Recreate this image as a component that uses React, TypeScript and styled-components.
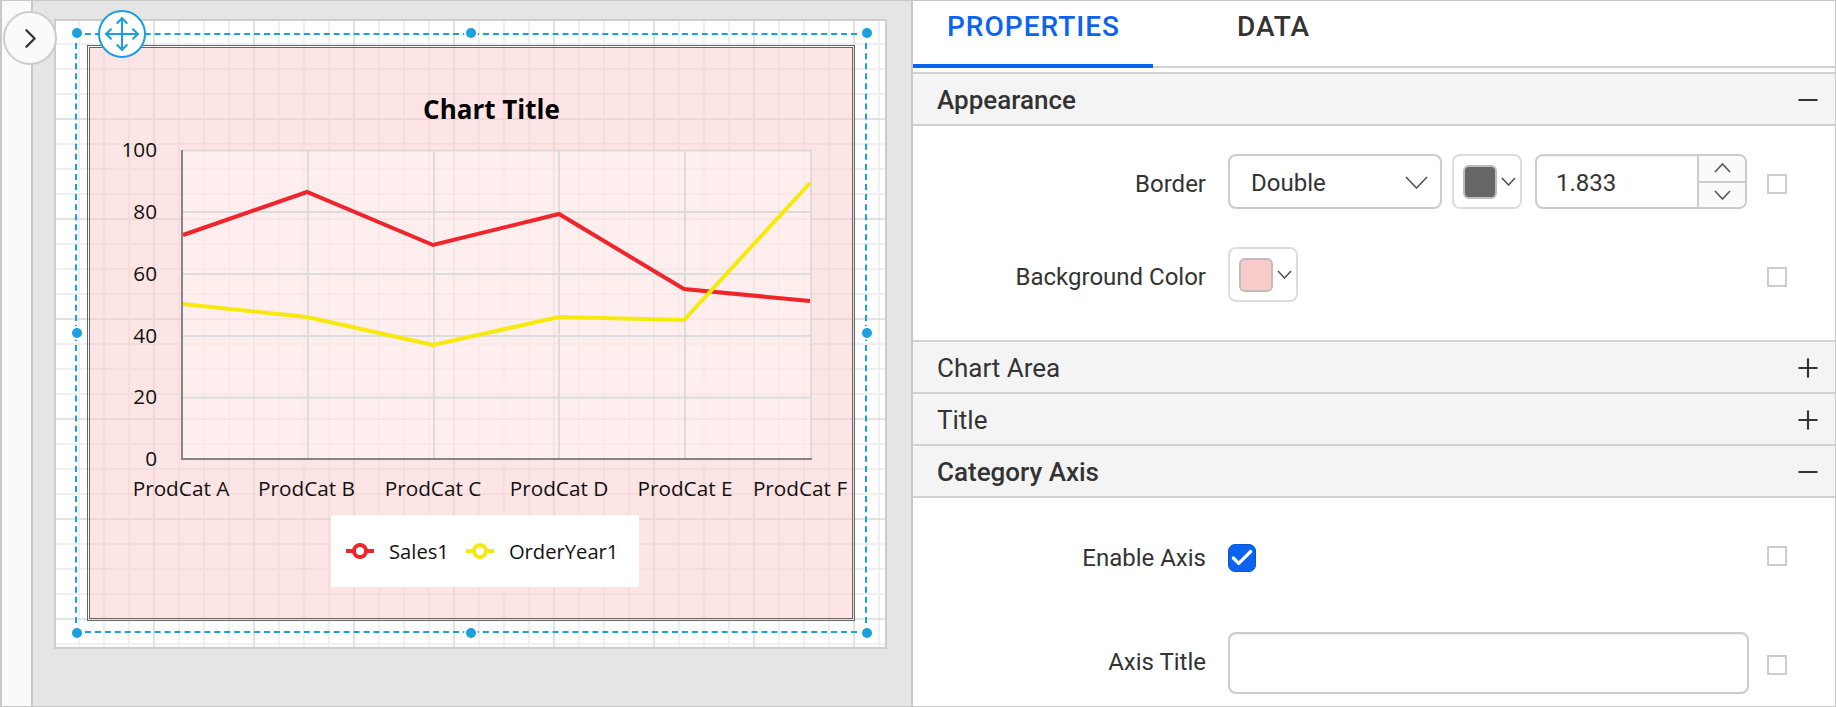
import React from 'react';
import styled, { createGlobalStyle } from 'styled-components';
import { Check, ChevronRight, Minus, Move, Plus } from 'lucide-react';

const GlobalStyle = createGlobalStyle`
  html, body {
    margin: 0;
    padding: 0;
    background: #fff;
  }
  * {
    box-sizing: border-box;
  }
`;

const Shell = styled.div`
  width: 1836px;
  height: 707px;
  display: flex;
  overflow: hidden;
  border: 1px solid #c8c8c8;
  border-left-width: 2px;
  font-family: Roboto, sans-serif;
  color: #333;
`;

const Sidebar = styled.aside`
  flex: 0 0 31px;
  position: relative;
  z-index: 3;
  background: #fafafa;
  border-right: 2px solid #c8c8c8;
`;

const ToggleButton = styled.button`
  position: absolute;
  left: 1px;
  top: 10px;
  width: 54px;
  height: 54px;
  padding: 0;
  display: flex;
  align-items: center;
  justify-content: center;
  border-radius: 50%;
  border: 2px solid #ccc;
  background: #fafafa;
  color: #333;
`;

const Canvas = styled.main`
  flex: 0 0 878px;
  background: #e5e5e5;
  padding: 18px 0 0 21px;
`;

const Page = styled.div`
  position: relative;
  width: 833px;
  height: 630px;
  padding: 24px 0 0 31px;
  border: 2px solid #cdcdcd;
  background-color: #fff;
  background-image: linear-gradient(to right, transparent 98px, #e2e2e2 98px),
    linear-gradient(to bottom, transparent 98px, #e2e2e2 98px),
    linear-gradient(to right, transparent 23px, #efefef 23px),
    linear-gradient(to bottom, transparent 23px, #efefef 23px);
  background-size: 100px 100%, 100% 100px, 25px 100%, 100% 25px;
  background-position: -1px 0, 0 -1px, -1px 0, 0 -1px;
`;

const ChartFrame = styled.section`
  width: 768px;
  height: 576px;
  display: flex;
  flex-direction: column;
  border: 3px double #666;
  background: rgba(253, 204, 204, 0.5);
  background-clip: padding-box;
`;

const ChartTitle = styled.h2`
  margin: 45px 0 0;
  padding-left: 41px;
  height: 31px;
  line-height: 32px;
  text-align: center;
  font-family: 'Open Sans', sans-serif;
  font-size: 26px;
  font-weight: 700;
  color: #000;
`;

const PlotSvg = styled.svg`
  display: block;
  flex: none;
`;

const AxisLabel = styled.text`
  font-family: 'Open Sans', sans-serif;
  font-size: 20.75px;
  fill: #111;
`;

const Legend = styled.div`
  align-self: flex-start;
  margin-left: 241px;
  width: 308px;
  height: 72px;
  padding-left: 15px;
  display: flex;
  align-items: center;
  gap: 17px;
  background: #fff;
  font-family: 'Open Sans', sans-serif;
  font-size: 20.2px;
  color: #111;
`;

const LegendItem = styled.div`
  display: flex;
  align-items: center;
  gap: 15px;
`;

const Selection = styled.div`
  position: absolute;
  left: 19px;
  top: 12px;
  width: 792px;
  height: 600px;
  border: 2px dashed #1a9fdf;
  pointer-events: none;
`;

const handleSpot = { start: '-1px', mid: '50%', end: 'calc(100% + 2px)' };

const Handle = styled.span<{ $x: keyof typeof handleSpot; $y: keyof typeof handleSpot }>`
  position: absolute;
  left: ${(p) => (p.$x === 'start' ? '0' : handleSpot[p.$x])};
  top: ${(p) => (p.$y === 'start' ? '-2px' : handleSpot[p.$y])};
  width: 10px;
  height: 10px;
  transform: translate(-50%, -50%);
  border-radius: 50%;
  background: #1a9fdf;
  box-shadow: 0 0 0 2px #fff;
`;

const MoveButton = styled.div`
  position: absolute;
  left: 21px;
  top: -25px;
  width: 48px;
  height: 48px;
  display: flex;
  align-items: center;
  justify-content: center;
  border: 2px solid #1a9fdf;
  border-radius: 50%;
  background: #fff;
  color: #1a9fdf;
`;

const Panel = styled.div`
  flex: 1;
  min-width: 0;
  border-left: 2px solid #c8c8c8;
  background: #fff;
`;

const Tabs = styled.nav`
  display: flex;
  height: 67px;
  border-bottom: 2px solid #d2d2d2;
  margin-bottom: 4px;
`;

const Tab = styled.div<{ $active?: boolean }>`
  height: 67px;
  width: 240px;
  padding: 10px 0 0 ${(p) => (p.$active ? '34px' : '84px')};
  font-size: 28px;
  line-height: 32px;
  font-weight: 500;
  letter-spacing: 1px;
  color: ${(p) => (p.$active ? '#0a64f0' : '#333')};
  border-bottom: ${(p) => (p.$active ? '4px solid #0a64f0' : 'none')};
`;

const SectionHeader = styled.div<{ $first?: boolean; $strong?: boolean }>`
  height: 52px;
  padding: 2px 12px 0 24px;
  display: flex;
  align-items: center;
  justify-content: space-between;
  background: #f4f4f4;
  border-bottom: 2px solid #d2d2d2;
  ${(p) => p.$first && 'border-top: 2px solid #d2d2d2; height: 54px;'}
  font-size: 26px;
  font-weight: ${(p) => (p.$strong ? 500 : 400)};
`;

const SectionBody = styled.div<{ $top: number; $bottom: number; $gap: number; $line?: boolean }>`
  display: flex;
  flex-direction: column;
  gap: ${(p) => p.$gap}px;
  padding: ${(p) => p.$top}px 48px ${(p) => p.$bottom}px 0;
  ${(p) => p.$line && 'border-bottom: 2px solid #d2d2d2;'}
`;

const Row = styled.div`
  display: grid;
  grid-template-columns: 315px 521px 38px;
  grid-auto-rows: minmax(55px, auto);
  align-items: center;
`;

const RowLabel = styled.label<{ $drop?: number }>`
  margin-top: ${(p) => p.$drop ?? 0}px;
  padding-right: 22px;
  text-align: right;
  font-size: 24px;
`;

const Controls = styled.div`
  display: flex;
  align-items: center;
  gap: 10px;
`;

const SelectBox = styled.div`
  width: 214px;
  height: 55px;
  padding: 2px 12px 0 21px;
  display: flex;
  align-items: center;
  justify-content: space-between;
  border: 2px solid #ccc;
  border-radius: 8px;
  font-size: 24px;
`;

const ColorPicker = styled.div`
  width: 70px;
  height: 55px;
  padding: 0 4px 0 9px;
  display: flex;
  align-items: center;
  justify-content: space-between;
  border: 2px solid #ddd;
  border-radius: 8px;
`;

const Swatch = styled.span<{ $color: string }>`
  width: 34px;
  height: 34px;
  border: 2px solid #bdbdbd;
  border-radius: 6px;
  background: ${(p) => p.$color};
`;

const NumberBox = styled.div`
  width: 212px;
  height: 55px;
  margin-left: 3px;
  display: flex;
  border: 2px solid #ccc;
  border-radius: 8px;
  overflow: hidden;
  font-size: 24px;
`;

const NumberValue = styled.div`
  flex: 1;
  padding: 2px 0 0 19px;
  display: flex;
  align-items: center;
  box-shadow: inset 0 2px 2px -1px #eee;
`;

const Spinner = styled.div`
  flex: 0 0 48px;
  display: flex;
  flex-direction: column;
  border-left: 2px solid #ccc;
  background: #fafafa;
`;

const SpinButton = styled.div<{ $divided?: boolean }>`
  flex: 1;
  display: flex;
  align-items: center;
  justify-content: center;
  ${(p) => p.$divided && 'border-top: 2px solid #ccc;'}
`;

const Chevron = styled.svg`
  display: block;
  flex: none;
  fill: none;
  stroke: #555;
`;

const ResetBox = styled.span<{ $drop?: number }>`
  justify-self: end;
  margin-top: ${(p) => p.$drop ?? 0}px;
  width: 20px;
  height: 20px;
  border: 2px solid #ccc;
`;

const CheckedBox = styled.span`
  width: 28px;
  height: 28px;
  display: flex;
  align-items: center;
  justify-content: center;
  border-radius: 7px;
  background: #0a64f0;
  border: 1px solid #0a55cc;
  color: #fff;
`;

const TextField = styled.div`
  width: 521px;
  height: 62px;
  border: 2px solid #ccc;
  border-radius: 8px;
  box-shadow: inset 0 2px 2px -1px #eee;
`;

const categories = [
  { name: 'ProdCat A', x: 181 },
  { name: 'ProdCat B', x: 306.5 },
  { name: 'ProdCat C', x: 433 },
  { name: 'ProdCat D', x: 559 },
  { name: 'ProdCat E', x: 685 },
  { name: 'ProdCat F', x: 800 },
];

const ticks = [
  { value: 100, y: 150.5 },
  { value: 80, y: 212 },
  { value: 60, y: 274 },
  { value: 40, y: 336 },
  { value: 20, y: 397.5 },
  { value: 0, y: 459 },
];

const gridX = [308, 434, 559, 685, 811];

const sales = '183,235 307,192 433,245 559,214 684,289 810,301';
const orders = '183,304 307,317 433,345 559,317 684,320 810,183';

const LegendMarker = ({ color }: { color: string }) => (
  <svg width="28" height="18" viewBox="0 0 28 18">
    <path d="M0 9h28" stroke={color} strokeWidth="4" />
    <circle cx="14" cy="9" r="6" fill="#fff" stroke={color} strokeWidth="4" />
  </svg>
);

const DownChevron = ({ w, h, up }: { w: number; h: number; up?: boolean }) => (
  <Chevron width={w} height={h} viewBox={`0 0 ${w} ${h}`} strokeWidth="1.6">
    <polyline points={up ? `1,${h - 1} ${w / 2},1 ${w - 1},${h - 1}` : `1,1 ${w / 2},${h - 1} ${w - 1},1`} />
  </Chevron>
);

const Chart = () => (
  <ChartFrame>
    <ChartTitle>Chart Title</ChartTitle>
    <PlotSvg width="762" height="391" viewBox="90 124 762 391">
      <rect x="183" y="150" width="628" height="309" fill="#fff" fillOpacity="0.35" />
      {ticks.slice(0, 5).map((t) => (
        <line key={t.value} x1="183" x2="812" y1={t.y} y2={t.y} stroke="#dcdcdc" strokeWidth="2" />
      ))}
      {gridX.map((x) => (
        <line key={x} x1={x} x2={x} y1="150" y2="459" stroke="#dcdcdc" strokeWidth="2" />
      ))}
      <line x1="182" x2="182" y1="150" y2="460" stroke="#848484" strokeWidth="2" />
      <line x1="181" x2="812" y1="459" y2="459" stroke="#848484" strokeWidth="2" />
      <polyline points={sales} fill="none" stroke="#f0242b" strokeWidth="4" />
      <polyline points={orders} fill="none" stroke="#f7e90c" strokeWidth="4" />
      {ticks.map((t) => (
        <AxisLabel key={t.value} x="157" y={t.y + 6.5} textAnchor="end">
          {t.value}
        </AxisLabel>
      ))}
      {categories.map((c) => (
        <AxisLabel key={c.name} x={c.x} y="496" textAnchor="middle">
          {c.name}
        </AxisLabel>
      ))}
    </PlotSvg>
    <Legend>
      <LegendItem>
        <LegendMarker color="#f0242b" />
        Sales1
      </LegendItem>
      <LegendItem>
        <LegendMarker color="#f7e90c" />
        OrderYear1
      </LegendItem>
    </Legend>
  </ChartFrame>
);

const App = () => {
  return (
    <Shell>
      <GlobalStyle />
      <Sidebar>
        <ToggleButton>
          <ChevronRight size={33} strokeWidth={1.7} />
        </ToggleButton>
      </Sidebar>
      <Canvas>
        <Page>
          <Chart />
          <Selection>
            <Handle $x="start" $y="start" />
            <Handle $x="mid" $y="start" />
            <Handle $x="end" $y="start" />
            <Handle $x="start" $y="mid" />
            <Handle $x="end" $y="mid" />
            <Handle $x="start" $y="end" />
            <Handle $x="mid" $y="end" />
            <Handle $x="end" $y="end" />
            <MoveButton>
              <Move size={38} strokeWidth={1.3} />
            </MoveButton>
          </Selection>
        </Page>
      </Canvas>
      <Panel>
        <Tabs>
          <Tab $active>PROPERTIES</Tab>
          <Tab>DATA</Tab>
        </Tabs>
        <SectionHeader $first $strong>
          Appearance
          <Minus size={30} strokeWidth={1.7} />
        </SectionHeader>
        <SectionBody $top={28} $bottom={38} $gap={38} $line>
          <Row>
            <RowLabel $drop={5}>Border</RowLabel>
            <Controls>
              <SelectBox>
                Double
                <DownChevron w={23} h={13} />
              </SelectBox>
              <ColorPicker>
                <Swatch $color="#666" />
                <DownChevron w={15} h={9} />
              </ColorPicker>
              <NumberBox>
                <NumberValue>1.833</NumberValue>
                <Spinner>
                  <SpinButton>
                    <DownChevron w={17} h={10} up />
                  </SpinButton>
                  <SpinButton $divided>
                    <DownChevron w={17} h={10} />
                  </SpinButton>
                </Spinner>
              </NumberBox>
            </Controls>
            <ResetBox $drop={5} />
          </Row>
          <Row>
            <RowLabel $drop={5}>Background Color</RowLabel>
            <Controls>
              <ColorPicker>
                <Swatch $color="#f9cccc" />
                <DownChevron w={15} h={9} />
              </ColorPicker>
            </Controls>
            <ResetBox $drop={5} />
          </Row>
        </SectionBody>
        <SectionHeader>
          Chart Area
          <Plus size={30} strokeWidth={1.7} />
        </SectionHeader>
        <SectionHeader>
          Title
          <Plus size={30} strokeWidth={1.7} />
        </SectionHeader>
        <SectionHeader $strong>
          Category Axis
          <Minus size={30} strokeWidth={1.7} />
        </SectionHeader>
        <SectionBody $top={32} $bottom={0} $gap={47}>
          <Row>
            <RowLabel>Enable Axis</RowLabel>
            <Controls>
              <CheckedBox>
                <Check size={26} strokeWidth={3} />
              </CheckedBox>
            </Controls>
            <ResetBox $drop={-3} />
          </Row>
          <Row>
            <RowLabel $drop={-2}>Axis Title</RowLabel>
            <TextField />
            <ResetBox $drop={4} />
          </Row>
        </SectionBody>
      </Panel>
    </Shell>
  );
};

export default App;
